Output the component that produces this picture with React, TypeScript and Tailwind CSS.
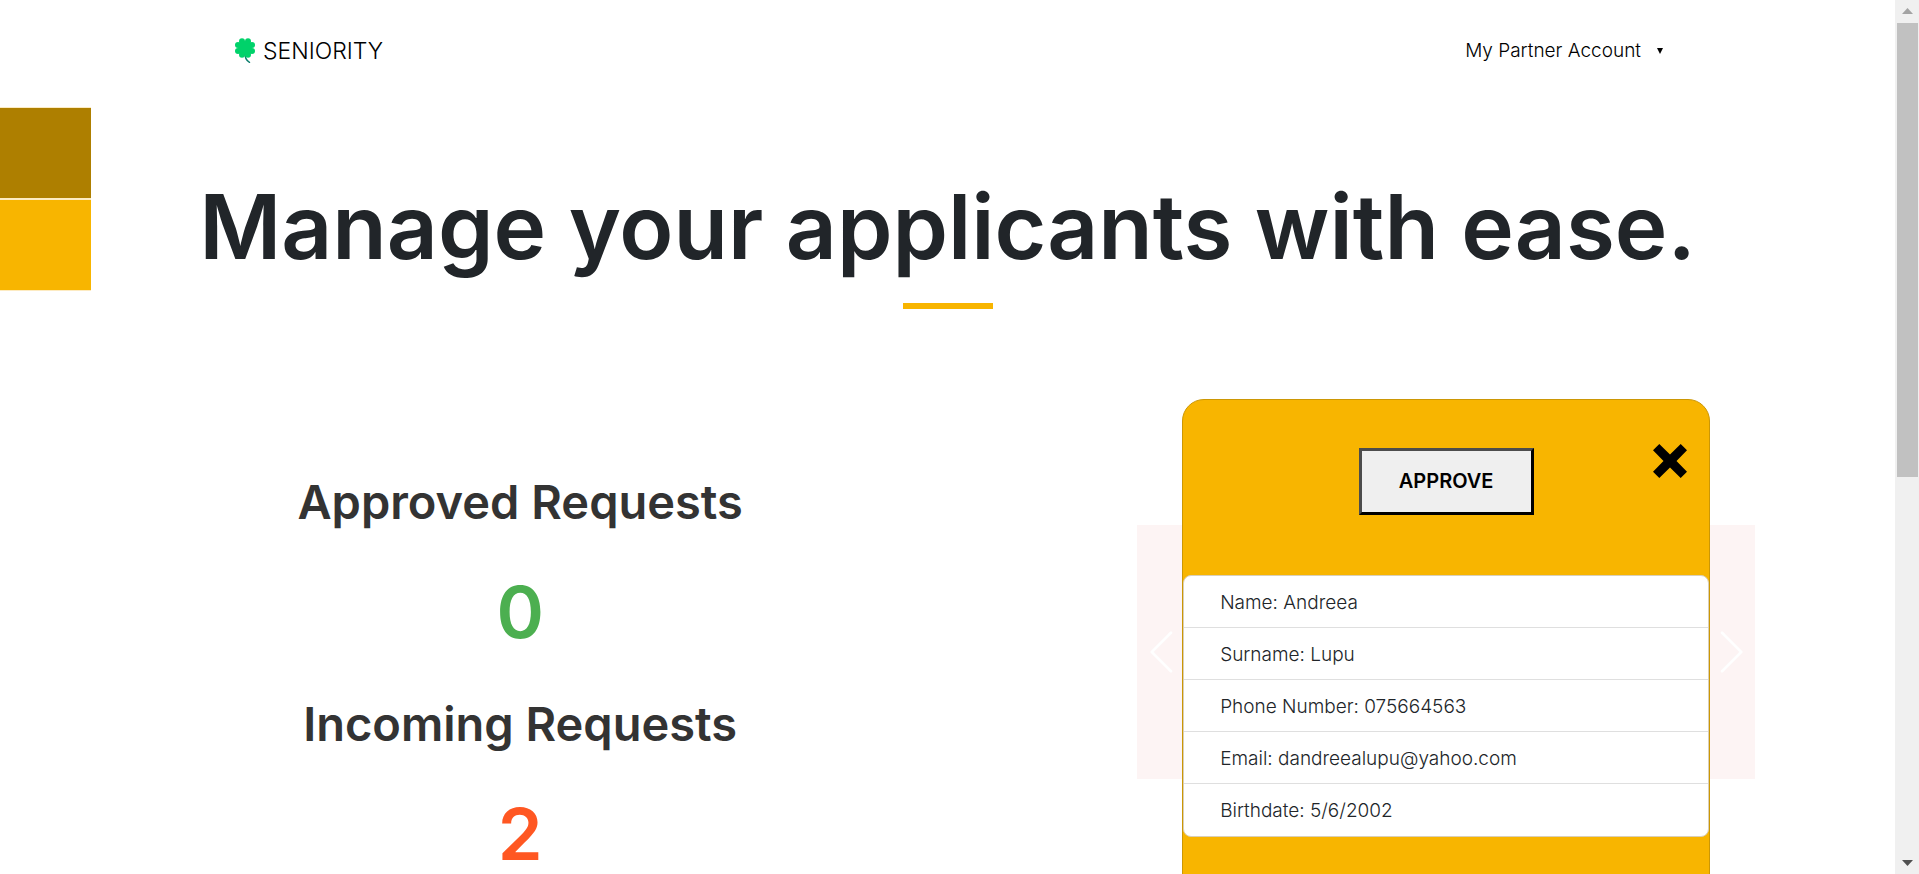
import React from "react";

const stats = [
  { label: "Approved Requests", value: 0, color: "text-[#4caf50]" },
  { label: "Incoming Requests", value: 2, color: "text-[#ff5722]" },
];

const details = [
  "Name: Andreea",
  "Surname: Lupu",
  "Phone Number: 075664563",
  "Email: dandreealupu@yahoo.com",
  "Birthdate: 5/6/2002",
];

function Clover() {
  return (
    <svg viewBox="0 0 20 26" className="h-[26px] w-5" aria-hidden="true">
      <path d="M9.6 13 C9.6 18 11 22.500 14.500 24.300" fill="none" stroke="#0a7d6c" strokeWidth="1.500" strokeLinecap="round" />
      <g fill="#00d26a">
        <circle cx="7" cy="3.300" r="3" />
        <circle cx="13" cy="3.300" r="3" />
        <circle cx="3" cy="7" r="3" />
        <circle cx="17" cy="7" r="3" />
        <circle cx="3" cy="13" r="3" />
        <circle cx="17" cy="13" r="3" />
        <circle cx="7" cy="16.700" r="3" />
        <circle cx="13" cy="16.700" r="3" />
        <path d="M4.500 4.500 L10 3.300 L15.500 4.500 L17 10 L15.500 15.500 L10 16.700 L4.500 15.500 L3 10 Z" />
      </g>
    </svg>
  );
}

function ArrowButton({ label, path }: { label: string; path: string }) {
  return (
    <button type="button" aria-label={label} className="flex h-1/2 w-[45px] items-center justify-center bg-[#fdf4f4]">
      <svg viewBox="0 0 16 16" className="h-11 w-11" aria-hidden="true">
        <path d={path} fill="none" stroke="#fff" strokeWidth="1" strokeLinecap="round" strokeLinejoin="round" />
      </svg>
    </button>
  );
}

function ApplicantCard() {
  return (
    <article className="relative w-[528px] rounded-[22px] border border-[#cc9704] bg-[#f8b500] pt-12 pb-[68px]">
      <div className="mb-[60px] flex justify-center">
        <button
          type="button"
          className="h-[67px] w-[175px] border-3 border-t-[#4c4c4c] border-r-black border-b-black border-l-[#4c4c4c] bg-[#efefef] text-xl font-semibold text-black"
        >
          APPROVE
        </button>
      </div>
      <button type="button" aria-label="Dismiss applicant" className="absolute top-11 right-[22px]">
        <svg viewBox="0 0 34 34" className="h-[34px] w-[34px]" aria-hidden="true">
          <path d="M6.300 0 17 10.500 27.700 0 34 6.300 23.500 17 34 27.700 27.700 34 17 23.500 6.300 34 0 27.700 10.500 17 0 6.300Z" />
        </svg>
      </button>
      <ul className="divide-y divide-[#dfdfdf] rounded-lg border border-[#d9cfb8] bg-white">
        {details.map((detail) => (
          <li key={detail} className="h-[52px] px-9 text-[19px] leading-[54px] font-light text-[#212529]">
            {detail}
          </li>
        ))}
      </ul>
    </article>
  );
}

function ScrollRail() {
  return (
    <div className="flex w-6 shrink-0 flex-col items-center bg-[#f0f0f0]" aria-hidden="true">
      <svg viewBox="0 0 24 23" className="h-[23px] w-6 shrink-0">
        <path d="M7 14 12.500 8 18 14Z" fill="#a3a3a3" />
      </svg>
      <div className="h-[52%] w-[21px] bg-[#c1c1c1]" />
      <svg viewBox="0 0 24 23" className="mt-auto h-[23px] w-6 shrink-0">
        <path d="M7 9 12.500 15 18 9Z" fill="#505050" />
      </svg>
    </div>
  );
}

export default function App() {
  return (
    <div className="flex h-screen overflow-hidden bg-white font-['Inter',sans-serif]">
      <div className="relative min-w-0 flex-1 overflow-hidden">
        <header className="flex h-[102px] items-center justify-between pr-[232px] pl-[235px]">
          <a href="#" className="flex items-center gap-2 text-[23px] font-light text-black">
            <Clover />
            SENIORITY
          </a>
          <button type="button" className="flex items-center gap-4 text-[19px] font-light text-black">
            My Partner Account
            <svg viewBox="0 0 6 6" className="h-1.5 w-1.5" aria-hidden="true">
              <path d="M0 0H6L3 6Z" />
            </svg>
          </button>
        </header>

        <aside className="absolute top-[107px] left-0" aria-hidden="true">
          <div className="h-[92px] w-[91px] border-y border-[#fdebc2] bg-[#ae7f00]" />
          <div className="h-[92px] w-[91px] border-y border-[#fdebc2] bg-[#f8b500]" />
        </aside>

        <main>
          <div className="flex flex-col items-center pt-[75px]">
            <h1 className="text-[89px] leading-[100px] font-semibold whitespace-nowrap text-[#212529]">
              Manage your applicants with ease.
            </h1>
            <div className="mt-[26px] h-1.5 w-[90px] bg-[#f8b500]" />
          </div>

          <div className="mt-[89px] grid grid-cols-[11fr_9fr]">
            <section className="flex flex-col items-center pt-[72px] pr-0.5">
              {stats.map((stat) => (
                <div key={stat.label} className="flex h-[222px] flex-col items-center">
                  <h2 className="text-[47px] leading-[64px] font-semibold whitespace-nowrap text-[#333]">{stat.label}</h2>
                  <p className={`mt-[42px] text-[72px] leading-[72px] font-semibold ${stat.color}`}>{stat.value}</p>
                </div>
              ))}
            </section>
            <section className="flex items-start justify-center pr-[45px]">
              <div className="flex h-[508px] items-center">
                <ArrowButton label="Previous applicant" path="M12 1 5 8l7 7" />
                <ApplicantCard />
                <ArrowButton label="Next applicant" path="m4 1 7 7-7 7" />
              </div>
            </section>
          </div>
        </main>
      </div>
      <ScrollRail />
    </div>
  );
}
